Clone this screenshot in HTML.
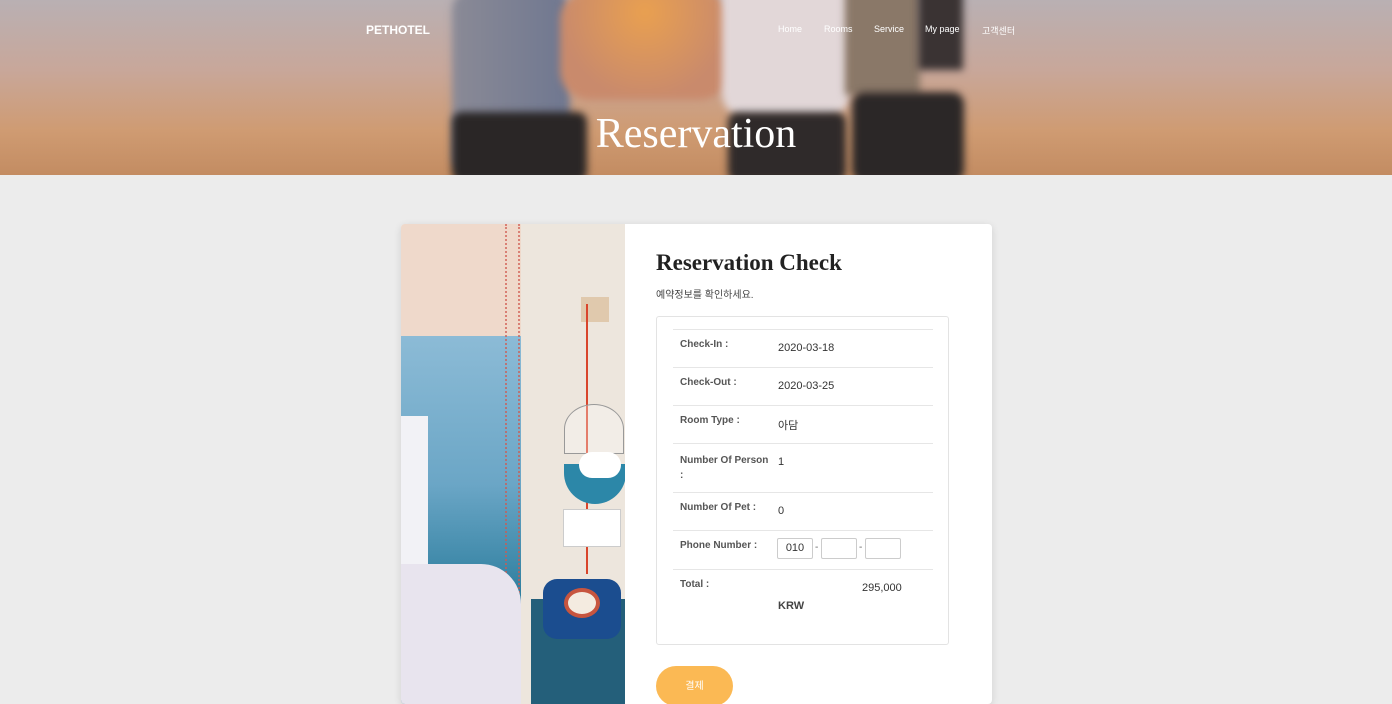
<!DOCTYPE html>
<html><head><meta charset="utf-8"><style>
*{margin:0;padding:0;box-sizing:border-box}
body{width:1392px;height:685px;overflow:hidden;background:#ececec;font-family:"Liberation Sans","Noto Sans CJK KR",sans-serif;position:relative}
.hero{position:absolute;left:0;top:0;width:1392px;height:175px;background:linear-gradient(180deg,#b9b0b3 0%,#c8a79a 40%,#cf9b72 75%,#c38c62 100%);overflow:hidden}
.abs{position:absolute}
.fig{filter:blur(4px)}
.nav{position:absolute;top:24px;color:#fff;font-size:9px}
.card{position:absolute;left:401px;top:224px;width:591px;height:480px;background:#fff;border-radius:4px;box-shadow:0 2px 8px rgba(0,0,0,.12);overflow:hidden}
.img{position:absolute;left:0;top:0;width:224px;height:480px;background:#ede6dd;overflow:hidden}
.row{position:absolute;left:16px;width:260px;border-top:1px solid #e6e6e6}
.lab{position:absolute;left:23px;font-size:10px;font-weight:bold;color:#555}
.val{position:absolute;left:121px;font-size:11px;color:#333}
.inp{position:absolute;width:36px;height:21px;border:1px solid #ccc;border-radius:2px;font-size:11px;text-align:center;line-height:19px;color:#333}
</style></head><body>
<div class="hero">
  <div class="abs fig" style="left:452px;top:-10px;width:118px;height:185px;background:linear-gradient(90deg,#8a8a96,#6f7790);border-radius:20px"></div>
  <div class="abs fig" style="left:452px;top:112px;width:135px;height:70px;background:#2a2626;border-radius:10px"></div>
  <div class="abs fig" style="left:560px;top:-10px;width:170px;height:110px;background:radial-gradient(ellipse at 50% 20%,#e9a050,#c98a6c 70%);border-radius:30px"></div>
  <div class="abs fig" style="left:722px;top:-10px;width:128px;height:128px;background:#e2d7d8;border-radius:0 0 25px 25px"></div>
  <div class="abs fig" style="left:728px;top:112px;width:118px;height:70px;background:#2f2a2a;border-radius:10px"></div>
  <div class="abs fig" style="left:845px;top:-10px;width:75px;height:105px;background:#8a7868"></div>
  <div class="abs fig" style="left:852px;top:92px;width:112px;height:90px;background:#2b2727;border-radius:12px"></div>
  <div class="abs fig" style="left:918px;top:-10px;width:45px;height:80px;background:#3a3333"></div>
  <div class="abs" style="left:366px;top:23px;color:#fff;font-size:12px;font-weight:bold">PETHOTEL</div>
  <div class="nav" style="left:778px">Home</div>
  <div class="nav" style="left:824px">Rooms</div>
  <div class="nav" style="left:874px">Service</div>
  <div class="nav" style="left:925px">My page</div>
  <div class="nav" style="left:982px">고객센터</div>
  <div class="abs" style="left:0;width:1392px;top:110px;text-align:center;color:#fff;font-family:'Liberation Serif',serif;font-size:42px">Reservation</div>
</div>
<div class="card">
  <div class="img">
    <div class="abs" style="left:0;top:0;width:120px;height:115px;background:#efd9cb"></div>
    <div class="abs" style="left:0;top:112px;width:120px;height:370px;background:linear-gradient(180deg,#8cbbd6,#6ba6c6 40%,#2f7f9f 70%,#2b6f8d)"></div>
    <div class="abs" style="left:104px;top:0;width:15px;height:380px;border-right:2px dotted #d05a50;border-left:2px dotted #d05a50;opacity:.7"></div>
    <div class="abs" style="left:0;top:192px;width:27px;height:175px;background:#f2f2f6"></div>
    <div class="abs" style="left:0;top:340px;width:120px;height:140px;background:#e8e4ee;border-radius:0 40px 0 0"></div>
    <div class="abs" style="left:180px;top:73px;width:28px;height:25px;background:#e0c9ad"></div>
    <div class="abs" style="left:185px;top:80px;width:2px;height:270px;background:#d9452c"></div>
    <div class="abs" style="left:163px;top:180px;width:60px;height:50px;border:1px solid #999;border-radius:50% 50% 0 0;background:rgba(255,255,255,.3)"></div>
    <div class="abs" style="left:163px;top:240px;width:62px;height:40px;background:#2c87a8;border-radius:0 0 31px 31px"></div>
    <div class="abs" style="left:178px;top:228px;width:42px;height:26px;background:#fff;border-radius:20px"></div>
    <div class="abs" style="left:162px;top:285px;width:58px;height:38px;background:#fff;border:1px solid #ccc"></div>
    <div class="abs" style="left:130px;top:375px;width:94px;height:105px;background:#245f7a"></div>
    <div class="abs" style="left:142px;top:355px;width:78px;height:60px;background:#1b4d8f;border-radius:14px"></div>
    <div class="abs" style="left:163px;top:364px;width:36px;height:30px;background:#f4ebe0;border-radius:50%;border:4px solid #c7553f"></div>
  </div>
  <div class="abs" style="left:255px;top:26px;font-family:'Liberation Serif',serif;font-weight:bold;font-size:23px;color:#222">Reservation Check</div>
  <div class="abs" style="left:255px;top:62px;font-size:10px;color:#444">예약정보를 확인하세요.</div>
  <div class="abs" style="left:255px;top:92px;width:293px;height:329px;border:1px solid #e3e3e3;border-radius:3px">
    <div class="row" style="top:12px"></div>
    <div class="lab" style="top:22px">Check-In :</div><div class="val" style="top:25px">2020-03-18</div>
    <div class="row" style="top:50px"></div>
    <div class="lab" style="top:60px">Check-Out :</div><div class="val" style="top:63px">2020-03-25</div>
    <div class="row" style="top:88px"></div>
    <div class="lab" style="top:98px">Room Type :</div><div class="val" style="top:100px">아담</div>
    <div class="row" style="top:126px"></div>
    <div class="lab" style="top:136px;line-height:15px">Number Of Person<br>:</div><div class="val" style="top:139px">1</div>
    <div class="row" style="top:175px"></div>
    <div class="lab" style="top:185px">Number Of Pet :</div><div class="val" style="top:188px">0</div>
    <div class="row" style="top:213px"></div>
    <div class="lab" style="top:223px">Phone Number :</div>
    <div class="inp" style="left:120px;top:221px">010</div>
    <div class="abs" style="left:158px;top:225px;font-size:10px;color:#666">-</div>
    <div class="inp" style="left:164px;top:221px"></div>
    <div class="abs" style="left:202px;top:225px;font-size:10px;color:#666">-</div>
    <div class="inp" style="left:208px;top:221px"></div>
    <div class="row" style="top:252px"></div>
    <div class="lab" style="top:262px">Total :</div>
    <div class="val" style="left:205px;top:265px">295,000</div>
    <div class="val" style="top:283px;font-weight:bold;color:#444">KRW</div>
  </div>
  <div class="abs" style="left:255px;top:442px;width:77px;height:40px;background:#fbb954;border-radius:20px;color:#fff;font-size:10px;text-align:center;padding-top:11px">결제</div>
</div>
</body></html>
